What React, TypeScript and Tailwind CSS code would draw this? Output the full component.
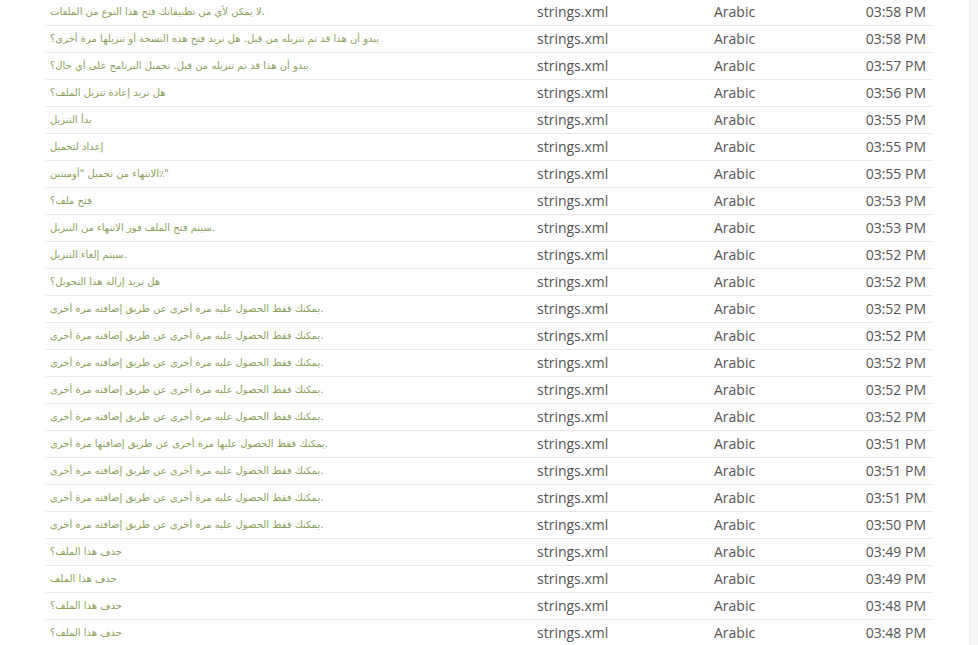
import React from "react";

const rows: [string, string][] = [
  ["لا يمكن لأي من تطبيقاتك فتح هذا النوع من الملفات.", "03:58 PM"],
  ["يبدو أن هذا قد تم تنزيله من قبل. هل تريد فتح هذه النسخة أو تنزيلها مرة أخرى؟", "03:58 PM"],
  ["يبدو أن هذا قد تم تنزيله من قبل. تحميل البرنامج على أي حال؟", "03:57 PM"],
  ["هل تريد إعادة تنزيل الملف؟", "03:56 PM"],
  ["بدأ التنزيل", "03:55 PM"],
  ["إعداد لتحميل", "03:55 PM"],
  ["\u202E\"٪الانتهاء من تحميل \"أومبتين\u202C", "03:55 PM"],
  ["فتح ملف؟", "03:53 PM"],
  ["سيتم فتح الملف فور الانتهاء من التنزيل.", "03:53 PM"],
  ["سيتم إلغاء التنزيل.", "03:52 PM"],
  ["هل تريد إزالة هذا التحويل؟", "03:52 PM"],
  ["يمكنك فقط الحصول عليه مرة أخرى عن طريق إضافته مرة أخرى.", "03:52 PM"],
  ["يمكنك فقط الحصول عليه مرة أخرى عن طريق إضافته مرة أخرى.", "03:52 PM"],
  ["يمكنك فقط الحصول عليه مرة أخرى عن طريق إضافته مرة أخرى.", "03:52 PM"],
  ["يمكنك فقط الحصول عليه مرة أخرى عن طريق إضافته مرة أخرى.", "03:52 PM"],
  ["يمكنك فقط الحصول عليه مرة أخرى عن طريق إضافته مرة أخرى.", "03:52 PM"],
  ["يمكنك فقط الحصول عليها مرة أخرى عن طريق إضافتها مرة أخرى.", "03:51 PM"],
  ["يمكنك فقط الحصول عليه مرة أخرى عن طريق إضافته مرة أخرى.", "03:51 PM"],
  ["يمكنك فقط الحصول عليه مرة أخرى عن طريق إضافته مرة أخرى.", "03:51 PM"],
  ["يمكنك فقط الحصول عليه مرة أخرى عن طريق إضافته مرة أخرى.", "03:50 PM"],
  ["حذف هذا الملف؟", "03:49 PM"],
  ["حذف هذا الملف", "03:49 PM"],
  ["حذف هذا الملف؟", "03:48 PM"],
  ["حذف هذا الملف؟", "03:48 PM"],
];

export default function App() {
  return (
    <div className="flex h-[645px] w-[978px] overflow-hidden bg-white">
      <div className="w-[969px] pl-[46px]">
        <div className="-mt-px w-[886px]">
          {rows.map(([text, time], i) => (
            <div
              key={i}
              className="flex h-[27px] items-center border-b border-[#e8e8e8] pb-px text-[14px] text-[#555555]"
              style={{ fontFamily: '"Open Sans", sans-serif' }}
            >
              <div
                className="w-[491px] pl-1 text-[10px] text-[#8c9f5c]"
                style={{ fontFamily: '"DejaVu Sans", sans-serif' }}
              >
                {text}
              </div>
              <div className="w-[177px]">strings.xml</div>
              <div className="flex-1">Arabic</div>
              <div className="pr-[6px] text-right">{time}</div>
            </div>
          ))}
        </div>
      </div>
      <div className="w-[9px] border-l border-[#efefef] bg-[#f7f7f7]" />
    </div>
  );
}
